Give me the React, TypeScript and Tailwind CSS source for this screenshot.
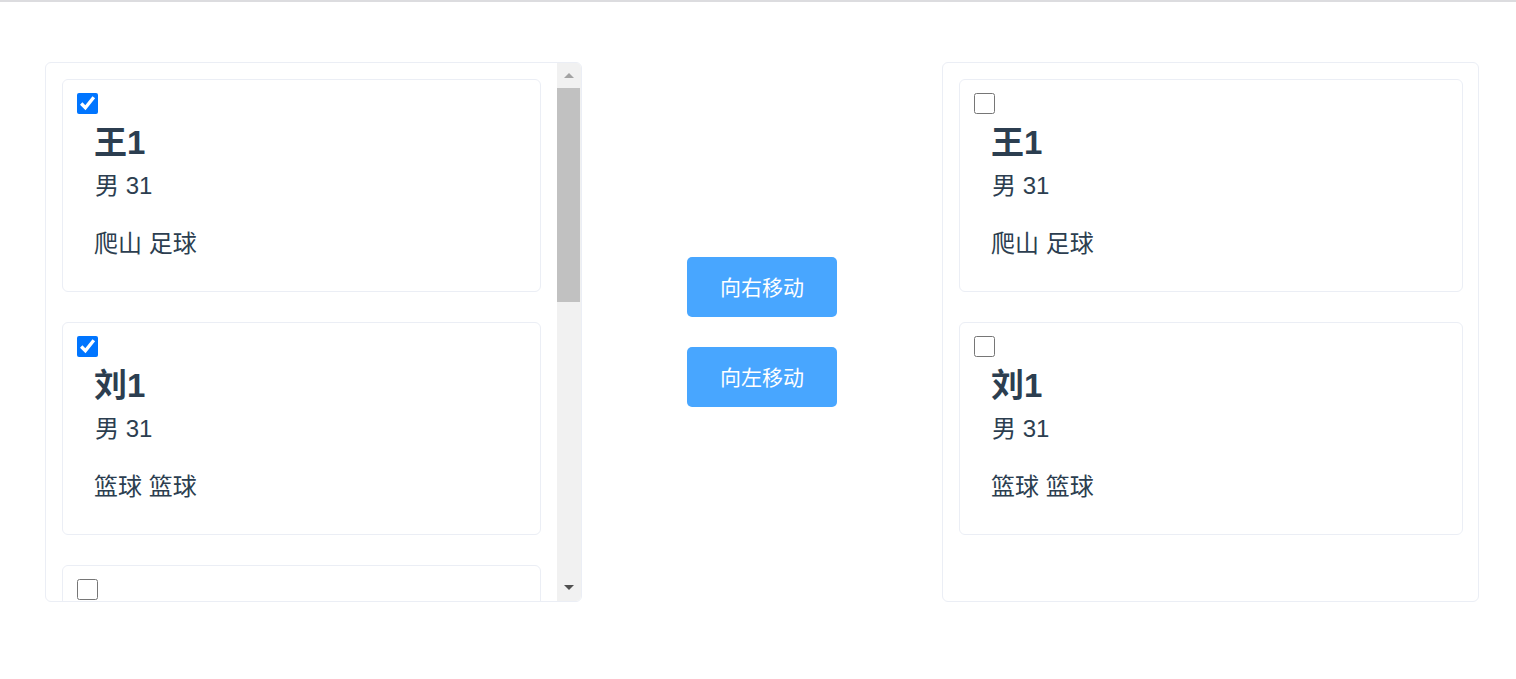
import React from "react";

type Person = { name: string; gender: string; age: number; hobbies: string };

const left: { p: Person; checked: boolean }[] = [
  { p: { name: "王1", gender: "男", age: 31, hobbies: "爬山 足球" }, checked: true },
  { p: { name: "刘1", gender: "男", age: 31, hobbies: "篮球 篮球" }, checked: true },
];

const right: { p: Person; checked: boolean }[] = [
  { p: { name: "王1", gender: "男", age: 31, hobbies: "爬山 足球" }, checked: false },
  { p: { name: "刘1", gender: "男", age: 31, hobbies: "篮球 篮球" }, checked: false },
];

function Card({ p, checked }: { p: Person; checked: boolean }) {
  return (
    <div className="box-border h-[213px] shrink-0 rounded-[6px] border border-[#ebeef5] bg-white pl-[14px] pt-[13px] text-[#2c3e50]">
      <input
        type="checkbox"
        defaultChecked={checked}
        className="m-0 block h-[21px] w-[21px]"
      />
      <div className="pl-[17px]">
        <div className="mt-[9px] text-[33px] font-bold leading-[40px]">{p.name}</div>
        <div className="mt-[7px] pl-[1px] text-[24px] leading-[32px]">
          {p.gender} {p.age}
        </div>
        <div className="mt-[26px] text-[24px] leading-[32px]">{p.hobbies}</div>
      </div>
    </div>
  );
}

function PartialCard() {
  return (
    <div className="box-border h-[213px] shrink-0 rounded-[6px] border border-[#ebeef5] bg-white pl-[14px] pt-[13px]">
      <input type="checkbox" className="m-0 block h-[21px] w-[21px]" />
    </div>
  );
}

function Scrollbar() {
  return (
    <div className="flex w-[24px] shrink-0 flex-col bg-[#f1f1f1]">
      <div className="flex h-[25px] items-center justify-center">
        <svg width="10" height="6" viewBox="0 0 10 6">
          <polygon points="5,0 10,5 0,5" fill="#a3a3a3" />
        </svg>
      </div>
      <div className="flex-1 pr-[1px]">
        <div className="h-[214px] w-full bg-[#c1c1c1]" />
      </div>
      <div className="flex h-[25px] items-center justify-center pb-[2px]">
        <svg width="10" height="6" viewBox="0 0 10 6">
          <polygon points="0,0 10,0 5,5" fill="#505050" />
        </svg>
      </div>
    </div>
  );
}

export default function App() {
  return (
    <div
      className="min-h-[679px] w-full bg-white"
      style={{ fontFamily: '"Liberation Sans", "Noto Sans CJK SC", sans-serif' }}
    >
      <div className="h-[2px] w-full bg-[#dcdcdf]" />
      <div className="flex pl-[45px] pt-[60px]">
        <div className="box-border flex h-[540px] w-[537px] overflow-hidden rounded-[6px] border border-[#ebeef5]">
          <div className="flex flex-1 flex-col gap-[30px] overflow-hidden px-[16px] pt-[16px]">
            {left.map((x, i) => (
              <Card key={i} p={x.p} checked={x.checked} />
            ))}
            <PartialCard />
          </div>
          <Scrollbar />
        </div>
        <div className="flex w-[360px] flex-col items-center justify-center gap-[30px]">
          <button className="h-[60px] w-[150px] rounded-[5px] bg-[#48a6ff] pt-[2px] text-[21px] text-white">
            向右移动
          </button>
          <button className="h-[60px] w-[150px] rounded-[5px] bg-[#48a6ff] pt-[2px] text-[21px] text-white">
            向左移动
          </button>
        </div>
        <div className="box-border flex h-[540px] w-[537px] flex-col gap-[30px] overflow-hidden rounded-[6px] border border-[#ebeef5] pl-[16px] pr-[15px] pt-[16px]">
          {right.map((x, i) => (
            <Card key={i} p={x.p} checked={x.checked} />
          ))}
        </div>
      </div>
    </div>
  );
}
